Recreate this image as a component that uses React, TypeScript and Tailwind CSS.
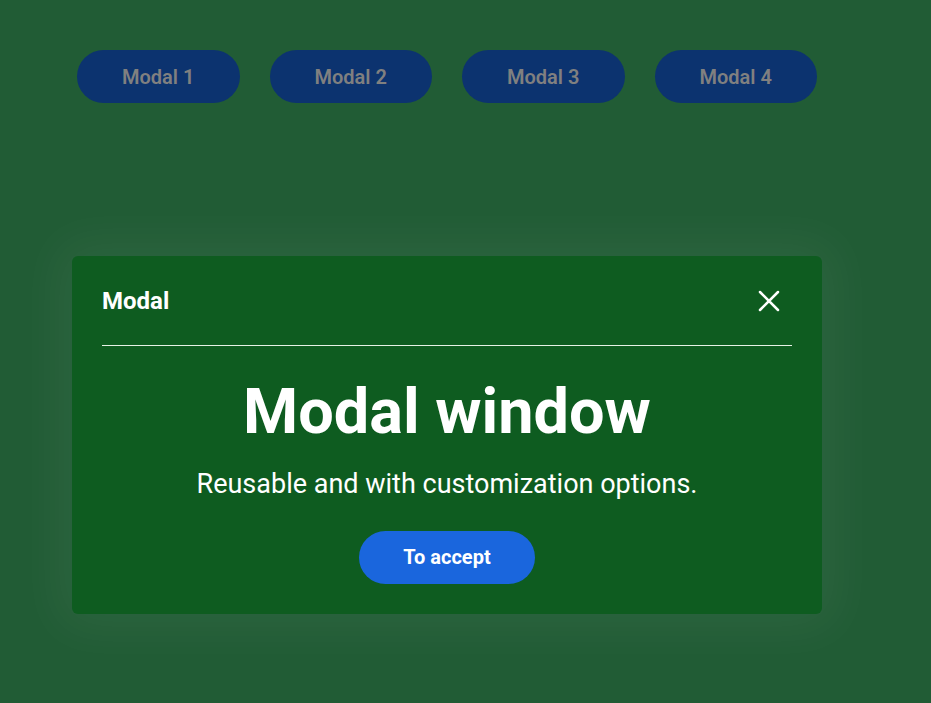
import React from 'react';

const tabs = ['Modal 1', 'Modal 2', 'Modal 3', 'Modal 4'];

export default function App() {
  return (
    <div className="min-h-[703px] w-full bg-[#215c35] font-['Roboto',sans-serif] overflow-hidden">
      <div className="flex gap-[30px] pt-[50px] pl-[77px]">
        {tabs.map((t) => (
          <button
            key={t}
            className="w-[162.5px] h-[53px] rounded-full bg-[#0c336f] text-[#808080] text-[20px] font-semibold"
          >
            {t}
          </button>
        ))}
      </div>

      <div className="ml-[72px] mt-[153px] w-[750px] rounded-[6px] bg-[#0e5c20] p-[30px] text-white shadow-[0_0_50px_15px_rgba(255,255,255,0.05)]">
        <div className="flex items-center justify-between h-[60px] pb-[29px] border-b border-[#e6f2e6]">
          <span className="text-[24px] font-bold leading-none">Modal</span>
          <svg width="22" height="22" viewBox="0 0 22 22" className="mr-[12px]">
            <path d="M2 2 L20 20 M20 2 L2 20" stroke="white" strokeWidth="2.5" strokeLinecap="round" />
          </svg>
        </div>
        <div className="flex flex-col items-center">
          <h1 className="mt-[30px] text-[63px] font-bold leading-[1.15]">Modal window</h1>
          <p className="mt-[20px] text-[27px] leading-[1.2]">Reusable and with customization options.</p>
          <button className="mt-[30px] w-[176px] h-[53px] rounded-full bg-[#1a66dd] text-[20px] font-bold">
            To accept
          </button>
        </div>
      </div>
    </div>
  );
}
